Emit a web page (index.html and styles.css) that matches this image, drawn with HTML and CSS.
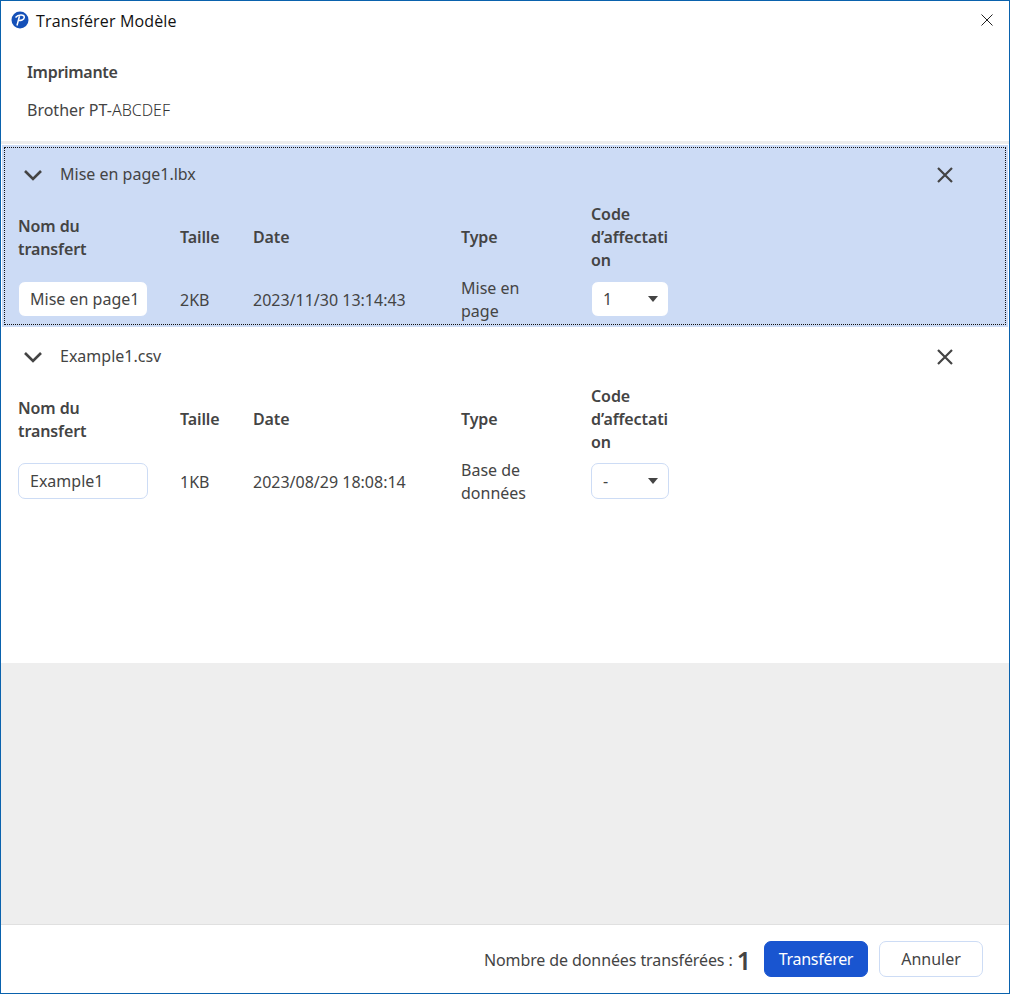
FILE: index.html
```html
<!DOCTYPE html>
<html lang="fr">
<head>
    <meta charset="UTF-8">
    <title>Transférer Modèle</title>
    <link rel="stylesheet" href="styles.css">
</head>
<body>
    <div class="window">
        <div class="titlebar">
            <svg class="app-icon" width="18" height="18" viewBox="0 0 18 18">
                <circle cx="9" cy="9" r="8.5" fill="#1450b8"/>
                <path d="M6 14.5 L8.5 5 M4.5 6.5 C7 3.5 13.5 3 13.3 6.3 C13 9 9.5 9.8 7.3 9.4" fill="none" stroke="#fff" stroke-width="1.5"/>
            </svg>
            <span class="title">Transférer Modèle</span>
            <svg class="win-close" width="12" height="12" viewBox="0 0 12 12">
                <path d="M0.5 0.5 L11.5 11.5 M11.5 0.5 L0.5 11.5" stroke="#222" stroke-width="1"/>
            </svg>
        </div>

        <div class="printer">
            <div class="printer-label">Imprimante</div>
            <div class="printer-name">Brother PT-<span class="printer-model">ABCDEF</span></div>
        </div>

        <div class="list">
            <!-- first file, selected -->
            <div class="item selected">
                <div class="item-head">
                    <svg class="chevron" width="20" height="12" viewBox="0 0 20 12">
                        <path d="M2 2 L10 10 L18 2" fill="none" stroke="#444" stroke-width="2.6"/>
                    </svg>
                    <span class="file-name">Mise en page1.lbx</span>
                    <svg class="remove" width="18" height="18" viewBox="0 0 18 18">
                        <path d="M2 2 L16 16 M16 2 L2 16" stroke="#444" stroke-width="2.2"/>
                    </svg>
                </div>
                <div class="columns">
                    <div class="th name-th">Nom du transfert</div>
                    <div class="th">Taille</div>
                    <div class="th">Date</div>
                    <div class="th">Type</div>
                    <div class="th">Code d’affectation</div>
                    <div class="td"><div class="input">Mise en page1</div></div>
                    <div class="td td-text">2KB</div>
                    <div class="td td-text">2023/11/30 13:14:43</div>
                    <div class="td td-text type-td">Mise en page</div>
                    <div class="td"><div class="select"><span>1</span><i class="arrow"></i></div></div>
                </div>
            </div>

            <!-- second file -->
            <div class="item">
                <div class="item-head">
                    <svg class="chevron" width="20" height="12" viewBox="0 0 20 12">
                        <path d="M2 2 L10 10 L18 2" fill="none" stroke="#444" stroke-width="2.6"/>
                    </svg>
                    <span class="file-name">Example1.csv</span>
                    <svg class="remove" width="18" height="18" viewBox="0 0 18 18">
                        <path d="M2 2 L16 16 M16 2 L2 16" stroke="#444" stroke-width="2.2"/>
                    </svg>
                </div>
                <div class="columns">
                    <div class="th name-th">Nom du transfert</div>
                    <div class="th">Taille</div>
                    <div class="th">Date</div>
                    <div class="th">Type</div>
                    <div class="th">Code d’affectation</div>
                    <div class="td"><div class="input">Example1</div></div>
                    <div class="td td-text">1KB</div>
                    <div class="td td-text">2023/08/29 18:08:14</div>
                    <div class="td td-text type-td">Base de données</div>
                    <div class="td"><div class="select"><span>-</span><i class="arrow"></i></div></div>
                </div>
            </div>
        </div>

        <div class="empty"></div>

        <div class="footer">
            <span class="count-label">Nombre de données transférées :</span>
            <span class="count">1</span>
            <button class="btn primary">Transférer</button>
            <button class="btn">Annuler</button>
        </div>
    </div>
</body>
</html>
```

FILE: styles.css
```css
html, body {
    margin: 0;
    height: 100%;
}

body {
    font-family: "Noto Sans", "Open Sans", sans-serif;
    font-size: 16px;
    line-height: 23px;
    color: #444;
}

.window {
    box-sizing: border-box;
    height: 994px;
    border: 1px solid #0a62ad;
    display: flex;
    flex-direction: column;
    background-color: #fff;
}

/* Title bar */
.titlebar {
    display: flex;
    align-items: center;
    height: 37px;
    padding: 0 16px 0 10px;
    flex-shrink: 0;
}

.app-icon {
    margin-right: 7px;
}

.title {
    font-family: "Open Sans", sans-serif;
    color: #111;
    letter-spacing: 0.15px;
    padding-top: 3px;
}

.win-close {
    margin-left: auto;
}

/* Printer */
.printer {
    height: 106px;
    box-sizing: border-box;
    padding: 23px 26px 0;
    border-bottom: 3px solid #ececec;
    flex-shrink: 0;
}

.printer-label {
    font-weight: 600;
    letter-spacing: -0.3px;
}

.printer-name {
    margin-top: 15px;
}

.printer-model {
    font-weight: 300;
    color: #333;
}

/* File list */
.list {
    height: 519px;
    box-sizing: border-box;
    padding: 1px 1px 0;
    flex-shrink: 0;
}

.item {
    padding-bottom: 6px;
}

.item.selected {
    background-color: #ccdbf5;
    outline: 1px dotted #111;
    outline-offset: -3px;
}

.item-head {
    display: flex;
    align-items: center;
    height: 58px;
    padding: 1px 54px 0 21px;
    box-sizing: border-box;
}

.chevron {
    margin-right: 17px;
}

.remove {
    margin-left: auto;
}

.columns {
    display: grid;
    grid-template-columns: 162px 73px 208px 130px 78px;
    padding-left: 16px;
    align-items: center;
}

.th {
    font-weight: 600;
    letter-spacing: -0.1px;
    padding-bottom: 3px;
    overflow-wrap: anywhere;
}

.name-th {
    max-width: 100px;
}

.td {
    box-sizing: border-box;
    min-height: 46px;
    display: flex;
    align-items: center;
}

.td-text {
    padding-top: 2px;
    margin-bottom: -2px;
}

.type-td {
    max-width: 90px;
}

.input, .select {
    box-sizing: border-box;
    height: 36px;
    margin-top: 2px;
    background-color: #fff;
    border: 1px solid #cddcf5;
    border-radius: 7px;
    display: flex;
    align-items: center;
    padding-left: 11px;
    padding-top: 1px;
}

.selected .input, .selected .select {
    border-color: #ccdbf5;
}

.input {
    width: 130px;
    white-space: nowrap;
}

.select {
    width: 78px;
    justify-content: space-between;
    padding-right: 10px;
}

.arrow {
    width: 0;
    height: 0;
    margin-top: -2px;
    border-left: 5px solid transparent;
    border-right: 5px solid transparent;
    border-top: 6px solid #444;
}

/* Empty area */
.empty {
    flex: 1;
    background-color: #eeeeee;
}

/* Footer */
.footer {
    height: 69px;
    box-sizing: border-box;
    border-top: 1px solid #e0e0e0;
    display: flex;
    align-items: center;
    justify-content: flex-end;
    padding: 0 26px 0 0;
    flex-shrink: 0;
}

.count-label {
    letter-spacing: -0.1px;
    padding-top: 2px;
}

.count {
    font-size: 25px;
    font-weight: 600;
    margin: 2px 13px 0 4px;
}

.btn {
    box-sizing: border-box;
    width: 104px;
    height: 36px;
    font-family: inherit;
    font-size: 16px;
    color: #444;
    background-color: #fff;
    border: 1px solid #cddcf5;
    border-radius: 7px;
}

.btn.primary {
    background-color: #1955d0;
    border-color: #1955d0;
    color: #fff;
    letter-spacing: -0.3px;
    margin-right: 11px;
}
```
